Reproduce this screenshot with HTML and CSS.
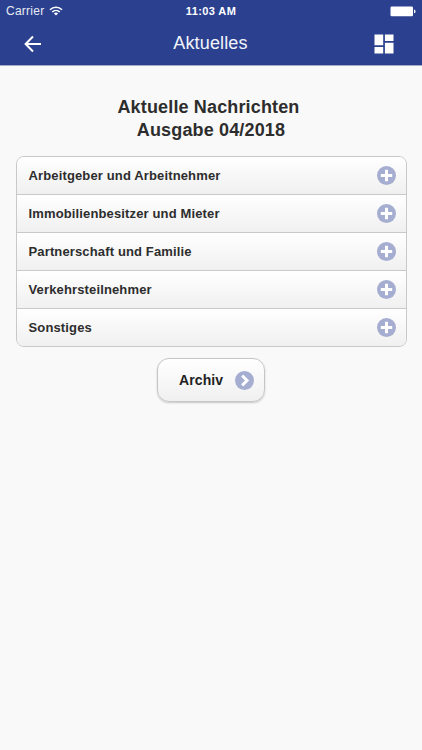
FILE: index.html
```html
<!DOCTYPE html>
<html lang="de">
<head>
<meta charset="utf-8">
<title>Aktuelles</title>
<link rel="stylesheet" href="styles.css">
</head>
<body>
<header class="header">
  <div class="status">
    <div class="carrier"><span class="carrier-name">Carrier</span>
      <svg class="wifi" viewBox="0 0 14 10"><path d="M1 3.7a8.6 8.6 0 0 1 12 0M3.2 6a5.5 5.5 0 0 1 7.6 0" fill="none" stroke="#fff" stroke-width="1.6"/><path d="M7 9.6 4.9 7.5a3.1 3.1 0 0 1 4.2 0z" fill="#fff"/></svg>
    </div>
    <span class="clock">11:03 AM</span>
    <svg class="battery" viewBox="0 0 26 11"><rect x=".5" y=".5" width="22.5" height="9.8" rx="1.2" fill="#fff"/><path d="M24 3.6q1.5 .3 1.5 1.8t-1.5 1.8z" fill="#fff"/></svg>
  </div>
  <nav class="bar">
    <svg class="back" viewBox="0 0 18 18"><path d="M17 9H2M9 1.5 1.6 9 9 16.5" fill="none" stroke="#fff" stroke-width="2"/></svg>
    <span class="bar-title">Aktuelles</span>
    <svg class="tiles" viewBox="0 0 20 20"><path d="M.5 .5h8.7v10.8H.5zM10.9 .5h8.6v6.4h-8.6zM.5 13.1h8.7v6.4H.5zM10.9 8.7h8.6v10.8h-8.6z" fill="#fff"/></svg>
  </nav>
</header>
<main class="content">
  <h1 class="heading"><span class="line1">Aktuelle Nachrichten</span><br><span class="line2">Ausgabe 04/2018</span></h1>
  <ul class="list">
    <li class="row"><span>Arbeitgeber und Arbeitnehmer</span><svg class="icon" viewBox="0 0 18 18"><circle cx="9" cy="9" r="9"/><path d="M9 3.6v10.8M3.6 9h10.8"/></svg></li>
    <li class="row"><span>Immobilienbesitzer und Mieter</span><svg class="icon" viewBox="0 0 18 18"><circle cx="9" cy="9" r="9"/><path d="M9 3.6v10.8M3.6 9h10.8"/></svg></li>
    <li class="row"><span>Partnerschaft und Familie</span><svg class="icon" viewBox="0 0 18 18"><circle cx="9" cy="9" r="9"/><path d="M9 3.6v10.8M3.6 9h10.8"/></svg></li>
    <li class="row"><span>Verkehrsteilnehmer</span><svg class="icon" viewBox="0 0 18 18"><circle cx="9" cy="9" r="9"/><path d="M9 3.6v10.8M3.6 9h10.8"/></svg></li>
    <li class="row"><span>Sonstiges</span><svg class="icon" viewBox="0 0 18 18"><circle cx="9" cy="9" r="9"/><path d="M9 3.6v10.8M3.6 9h10.8"/></svg></li>
  </ul>
  <button class="archive" type="button"><span>Archiv</span><svg class="icon" viewBox="0 0 18 18"><circle cx="9" cy="9" r="9"/><path d="m6.8 4.4 4.6 4.6-4.6 4.6"/></svg></button>
</main>
</body>
</html>
```
FILE: styles.css
```css
* { box-sizing: border-box; }
body {
  margin: 0;
  min-height: 750px;
  background: #f9f9f9;
  color: #2d2d2d;
  font-family: "Liberation Sans", Arial, sans-serif;
}
svg { display: block; flex: none; }
.header {
  height: 66px;
  background: #2b418f;
  border-bottom: 1px solid #a5abc5;
  color: #fff;
}
.status {
  display: grid;
  grid-template-columns: 1fr auto 1fr;
  height: 22px;
  padding: 0 6px;
  align-items: center;
}
.carrier { display: flex; align-items: center; gap: 5px; }
.carrier-name { font-size: 12px; letter-spacing: 0.25px; color: #e8ebf5; }
.wifi { width: 14px; height: 10px; }
.clock { font-size: 11px; font-weight: bold; letter-spacing: 0.4px; }
.battery { width: 26px; height: 11px; justify-self: end; }
.bar {
  display: grid;
  grid-template-columns: 1fr auto 1fr;
  align-items: center;
  height: 43px;
  padding: 0 28px 0 24px;
}
.back { width: 18px; height: 18px; }
.bar-title { font-size: 18px; letter-spacing: 0.15px; padding-left: 3px; color: #f2f4fb; }
.tiles { width: 20px; height: 20px; justify-self: end; }
.content {
  display: flex;
  flex-direction: column;
  align-items: center;
  padding: 30px 16px 0;
}
.heading {
  margin: 0;
  font-size: 18px;
  line-height: 22.5px;
  text-align: center;
}
.line1 { letter-spacing: 0.15px; padding-right: 5px; }
.line2 { letter-spacing: 0.15px; }
.list {
  width: 391px;
  height: 191px;
  margin: 15px 0 0;
  padding: 0;
  list-style: none;
  display: grid;
  grid-template-rows: 37px repeat(4, 38px);
  border: 1px solid #c9c9c9;
  border-radius: 8px;
  overflow: hidden;
}
.row {
  display: flex;
  align-items: center;
  justify-content: space-between;
  padding: 0 10px 0 12px;
  font-size: 13px;
  font-weight: bold;
  letter-spacing: 0.14px;
  background: linear-gradient(#fff, #f0f0f0);
}
.row + .row { border-top: 1px solid #c9c9c9; }
.icon { width: 19px; height: 19px; }
.icon circle { fill: #a5aed0; }
.icon path { fill: none; stroke: #fff; stroke-width: 2.8; }
.archive {
  display: flex;
  align-items: center;
  gap: 12px;
  width: 108px;
  height: 44px;
  margin: 11px 0 0;
  padding: 0 10px 0 21px;
  border: 1px solid #c6c6c6;
  border-radius: 12px;
  background: linear-gradient(#fff, #f0f0f0);
  box-shadow: 0 1px 2px rgba(0, 0, 0, 0.2);
  color: #222;
  font: bold 14px "Liberation Sans", Arial, sans-serif;
  letter-spacing: 0.1px;
}
```
